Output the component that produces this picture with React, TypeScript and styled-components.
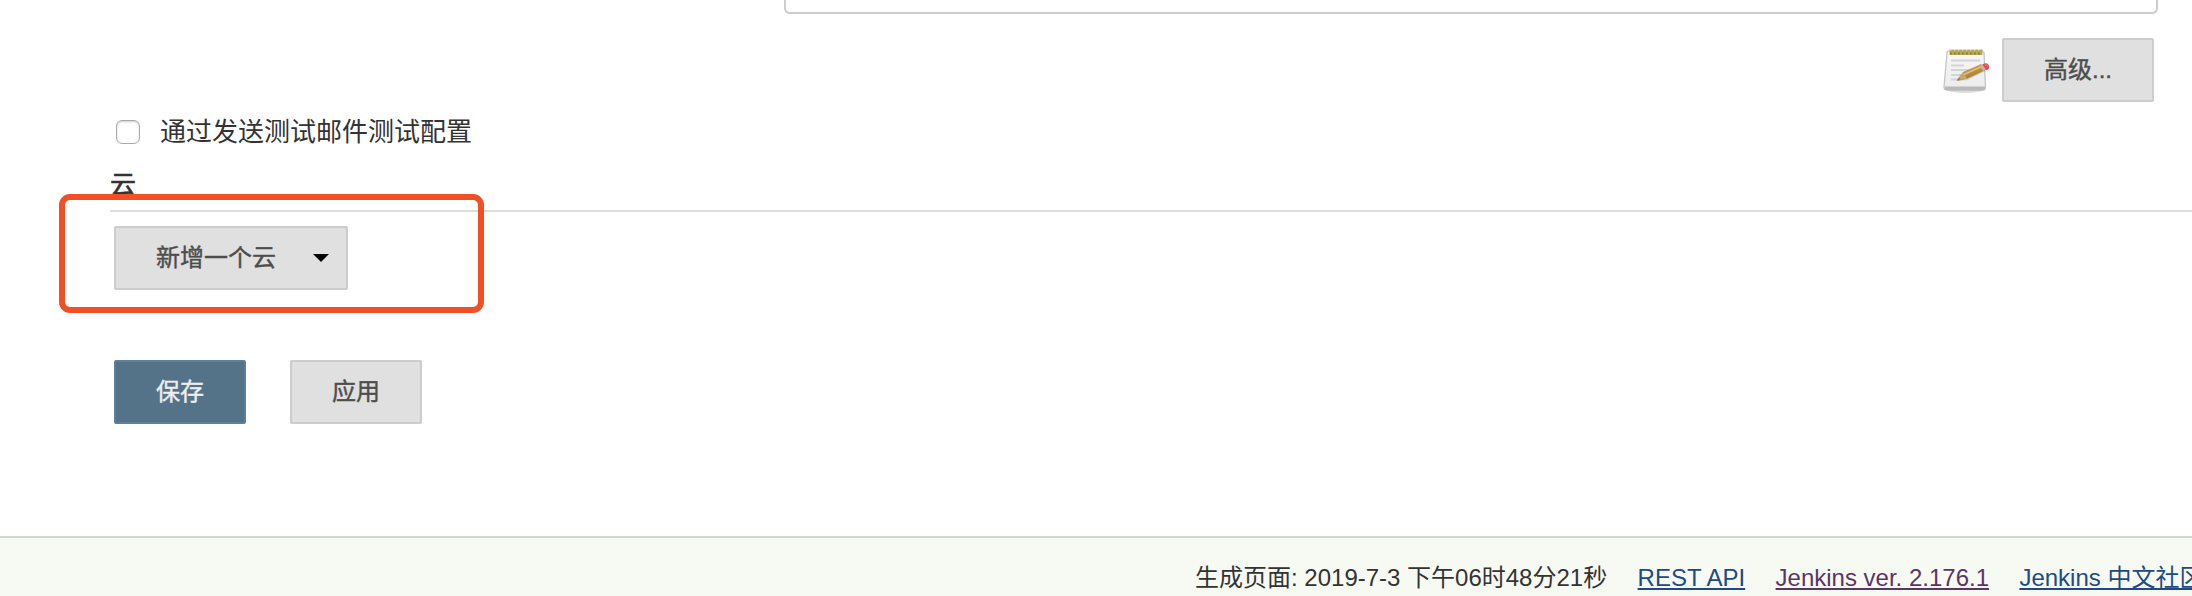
import React from "react";
import styled, { createGlobalStyle } from "styled-components";

const GlobalStyle = createGlobalStyle`
  html, body { margin: 0; padding: 0; background: #fff; overflow: hidden; }
  * { box-sizing: border-box; }
`;

const Page = styled.div`
  position: relative;
  display: flex;
  flex-direction: column;
  width: 2192px;
  height: 596px;
  overflow: hidden;
  color: #333;
  font-family: "Liberation Sans", "Noto Sans CJK SC", sans-serif;
  font-size: 24px;
  line-height: 36px;
  white-space: nowrap;
`;

const Form = styled.main`
  height: 536px;
  padding-left: 110px;
`;

const TextField = styled.div`
  width: 1374px;
  height: 14px;
  margin-left: 674px;
  border: 2px solid #ccc;
  border-top: 0;
  border-radius: 0 0 6px 6px;
`;

const AdvancedRow = styled.div`
  display: flex;
  justify-content: flex-end;
  align-items: center;
  gap: 12px;
  height: 64px;
  margin-top: 24px;
  padding-right: 38px;
`;

const Button = styled.button<{ $primary?: boolean; $width: number }>`
  display: flex;
  align-items: center;
  width: ${(p) => p.$width}px;
  height: 64px;
  padding: 0 0 0 40px;
  border: 2px solid ${(p) => (p.$primary ? "#5b8199" : "#ccc")};
  border-radius: 2px;
  background: ${(p) => (p.$primary ? "#547388" : "#e0e0e0")};
  color: ${(p) => (p.$primary ? "#eee" : "#4d4d4d")};
  font: 400 24px/36px "Liberation Sans", "Noto Sans CJK SC", sans-serif;
  -webkit-text-stroke: 0.4px currentColor;
`;

const Caret = styled.span`
  margin: 0 0 0 37px;
  border: 8px solid transparent;
  border-top: 8px solid #000;
  border-bottom: 0;
`;

const CheckRow = styled.label`
  display: flex;
  align-items: center;
  height: 36px;
  margin-top: 12px;
  padding-left: 6px;
  font-size: 26px;
`;

const Checkbox = styled.input`
  appearance: none;
  width: 24px;
  height: 24px;
  margin: 0 20px 0 0;
  border: 1px solid #aaa;
  border-radius: 6px;
  background: #fff;
  box-shadow: inset 0 1px 2px #ccc;
`;

const SectionTitle = styled.h2`
  height: 62px;
  margin: 0;
  padding-top: 16px;
  border-bottom: 2px solid #ddd;
  font-size: 26px;
  line-height: 38px;
  font-weight: 400;
  -webkit-text-stroke: 0.6px currentColor;
`;

const CloudRow = styled.div`
  padding: 14px 0 0 4px;
`;

const Actions = styled.div`
  display: flex;
  gap: 44px;
  padding: 70px 0 0 4px;
`;

const Highlight = styled.div`
  position: absolute;
  left: 59px;
  top: 194px;
  width: 425px;
  height: 119px;
  border: 6px solid #f05023;
  border-radius: 11px;
`;

const Footer = styled.footer`
  display: flex;
  gap: 30.4px;
  height: 60px;
  padding: 22px 0 0 1195px;
  border-top: 2px solid #d3d7cf;
  background: #f6faf2;
`;

const FooterLink = styled.a<{ $visited?: boolean }>`
  color: ${(p) => (p.$visited ? "#5c3566" : "#204a87")};
  text-decoration: underline;
  text-decoration-thickness: 2px;
  text-underline-offset: 2px;
  text-decoration-skip-ink: none;
`;

const Notepad = styled.svg`
  margin-top: 2px;
`;

function NotepadIcon() {
  return (
    <Notepad width="48" height="48" viewBox="0 0 48 48">
      <defs>
        <linearGradient id="paper" x2="0" y2="1">
          <stop stopColor="#f7f7f7" />
          <stop offset="1" stopColor="#ececec" />
        </linearGradient>
        <linearGradient id="wood" x1="0" y1="0" x2="0.5" y2="1">
          <stop stopColor="#deb466" />
          <stop offset="1" stopColor="#a0752d" />
        </linearGradient>
      </defs>
      <ellipse cx="23" cy="43" rx="17" ry="3" fill="#ddd" />
      <path d="M5 6Q5 4 7 4H40Q42 4 42 6L43.5 40Q43.5 43 41 43H5Q2 43 2 40Z" fill="url(#paper)" stroke="#c2c2c2" strokeWidth="1.2" />
      <path d="M3 39.5H43V41.5Q43 43.5 40 43.5H6Q3 43.5 3 41.5Z" fill="#b9b9b9" />
      <path d="M7.5 2.5H40.5V8H7.5Z" fill="#b6a658" />
      <path d="M8 2.7H40" stroke="#fff" strokeWidth="1.6" strokeDasharray="1.4 2.6" opacity=".7" />
      <path d="M8 6.5H40" stroke="#948436" strokeWidth="2" strokeDasharray="2 2" />
      <path d="M9 13.5H38M9 18.5H22M9 23H30M9 28H24M9 32.5H18" stroke="#d4d4d4" strokeWidth="2" />
      <path d="M17 34L22 26L40 18L44 24L26 33Z" fill="#000" opacity=".1" />
      <path d="M15 33.5L21 25.5L39 17.5L43 23L25 31.5Z" fill="url(#wood)" stroke="#ae8b50" strokeWidth=".7" />
      <path d="M15 33.5L21 25.5L25 31.5Z" fill="#c7a967" />
      <path d="M15 33.5L17 30.5L18.7 32.3Z" fill="#887b62" />
      <path d="M22 27.5L39 19.7" stroke="#e3be73" strokeWidth="1.5" />
      <path d="M38 18L41 17L44 22.5L41 24Z" fill="#c5b5b0" />
      <path d="M40.5 17.5Q45 14.5 47 18.5Q48 22.5 44 23.3Z" fill="#dd4f50" />
      <path d="M43 18Q45 17 46 19.5" fill="none" stroke="#ea8582" />
    </Notepad>
  );
}

export default function App() {
  return (
    <Page>
      <GlobalStyle />
      <Form>
        <TextField />
        <AdvancedRow>
          <NotepadIcon />
          <Button $width={152}>高级...</Button>
        </AdvancedRow>
        <CheckRow>
          <Checkbox type="checkbox" />
          <span>通过发送测试邮件测试配置</span>
        </CheckRow>
        <SectionTitle>云</SectionTitle>
        <CloudRow>
          <Button $width={234}>
            新增一个云
            <Caret />
          </Button>
        </CloudRow>
        <Actions>
          <Button $primary $width={132}>保存</Button>
          <Button $width={132}>应用</Button>
        </Actions>
      </Form>
      <Footer>
        <span>生成页面: 2019-7-3 下午06时48分21秒</span>
        <FooterLink>REST API</FooterLink>
        <FooterLink $visited>Jenkins ver. 2.176.1</FooterLink>
        <FooterLink>Jenkins 中文社区</FooterLink>
      </Footer>
      <Highlight />
    </Page>
  );
}
